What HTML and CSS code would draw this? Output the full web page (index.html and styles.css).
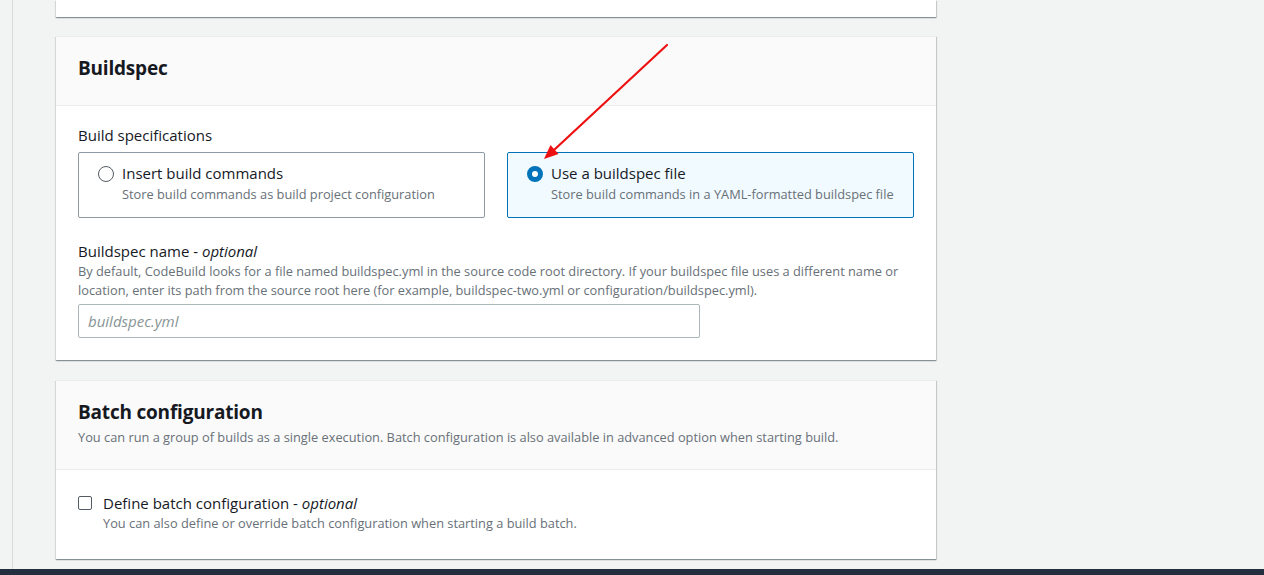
FILE: index.html
```html
<!DOCTYPE html>
<html lang="en">
<head>
<meta charset="utf-8">
<title>Buildspec</title>
<link rel="stylesheet" href="styles.css">
</head>
<body>
<div class="layout">
  <div class="rail"></div>
  <main class="main">
    <section class="card card-prev"></section>

    <section class="card">
      <header class="card-header">
        <h2 class="card-title">Buildspec</h2>
      </header>
      <div class="card-body">
        <div class="field-label">Build specifications</div>
        <div class="tiles">
          <div class="tile">
            <span class="radio"></span>
            <div class="tile-text">
              <div class="tile-title">Insert build commands</div>
              <div class="tile-desc">Store build commands as build project configuration</div>
            </div>
          </div>
          <div class="tile tile-selected">
            <span class="radio radio-on"></span>
            <div class="tile-text">
              <div class="tile-title">Use a buildspec file</div>
              <div class="tile-desc">Store build commands in a YAML-formatted buildspec file</div>
            </div>
          </div>
        </div>
        <div class="field">
          <div class="field-label">Buildspec name - <i>optional</i></div>
          <p class="field-desc">By default, CodeBuild looks for a file named buildspec.yml in the source code root directory. If your buildspec file uses a different name or location, enter its path from the source root here (for example, buildspec-two.yml or configuration/buildspec.yml).</p>
          <input class="text-input" type="text" placeholder="buildspec.yml">
        </div>
      </div>
    </section>

    <section class="card card-batch">
      <header class="card-header card-header-batch">
        <h2 class="card-title card-title-batch">Batch configuration</h2>
        <p class="card-desc">You can run a group of builds as a single execution. Batch configuration is also available in advanced option when starting build.</p>
      </header>
      <div class="card-body card-body-batch">
        <div class="check-row">
          <span class="checkbox"></span>
          <span class="check-label">Define batch configuration - <i>optional</i></span>
        </div>
        <p class="check-desc">You can also define or override batch configuration when starting a build batch.</p>
      </div>
    </section>
  </main>
</div>
<div class="footer-bar"></div>

<svg class="annotation" width="1264" height="575" viewBox="0 0 1264 575" aria-hidden="true">
  <line x1="667" y1="45" x2="554" y2="150" stroke="#ee1111" stroke-width="2.2" stroke-linecap="round"/>
  <polygon points="544,159 558.5,154 550.5,145" fill="#ee1111"/>
</svg>
</body>
</html>
```

FILE: styles.css
```css
* { box-sizing: border-box; }

html, body {
  margin: 0;
  padding: 0;
}

body {
  position: relative;
  width: 1264px;
  height: 575px;
  overflow: hidden;
  background: #f2f3f3;
  font-family: "Open Sans", "Noto Sans", sans-serif;
  color: #16191f;
}

.layout {
  display: flex;
  height: 569px;
}

.rail {
  width: 13px;
  border-right: 1px solid #d5dbdb;
  flex: none;
}

.main {
  padding-left: 43px;
  width: 923px;
}

.card {
  width: 880px;
  background: #fff;
  border-top: 1px solid #eaeded;
  box-shadow: 0 1px 1px 0 rgba(0, 28, 36, 0.3), 1px 1px 1px 0 rgba(0, 28, 36, 0.15), -1px 1px 1px 0 rgba(0, 28, 36, 0.08);
  margin-bottom: 20px;
}

.card-prev {
  height: 17px;
  border-top: none;
  margin-bottom: 19px;
}

.card-header {
  background: #fafafa;
  border-bottom: 1px solid #eaeded;
  padding: 17px 22px 23px;
}

.card-title {
  margin: 0;
  font-size: 19px;
  letter-spacing: -0.2px;
  line-height: 28px;
  font-weight: 700;
  color: #16191f;
}

.card-title-batch {
  margin-bottom: 2px;
}

.card-header-batch {
  padding-bottom: 22px;
}

.card-desc {
  margin: 0;
  font-size: 12.8px;
  line-height: 19px;
  color: #687078;
}

.card-body {
  padding: 18px 22px 22px;
}

.card-body-batch {
  padding: 22px 22px 26px;
}

.field-label {
  font-size: 15px;
  line-height: 22px;
  color: #16191f;
}

.tiles {
  display: grid;
  grid-template-columns: 1fr 1fr;
  gap: 22px;
  margin-top: 6px;
}

.tile {
  display: flex;
  align-items: flex-start;
  gap: 8px;
  border: 1px solid #8d9aa3;
  border-radius: 2px;
  padding: 9px 19px 15px;
}

.tile-selected {
  border-color: #0073bb;
  background: #f1faff;
}

.radio {
  flex: none;
  width: 16px;
  height: 16px;
  margin-top: 4px;
  border-radius: 50%;
  border: 1.5px solid #545b64;
  background: #fff;
}

.radio-on {
  border: 5px solid #0073bb;
}

.tile-title {
  font-size: 15px;
  line-height: 22px;
  color: #16191f;
  margin-bottom: 2px;
}

.tile-desc {
  font-size: 12.8px;
  line-height: 16px;
  color: #687078;
}

.field {
  margin-top: 22px;
}

.field-desc {
  margin: 0;
  font-size: 12.8px;
  line-height: 19px;
  color: #687078;
}

.text-input {
  display: block;
  margin-top: 4px;
  width: 622px;
  height: 34px;
  border: 1px solid #aab7b8;
  border-radius: 2px;
  padding: 0 9px;
  font-family: inherit;
  font-size: 15px;
  color: #16191f;
  background: #fff;
}

.text-input::placeholder {
  font-style: italic;
  color: #879596;
}

.check-row {
  display: flex;
  align-items: center;
  gap: 11px;
  height: 22px;
}

.checkbox {
  flex: none;
  width: 14px;
  height: 14px;
  border: 1.5px solid #545b64;
  border-radius: 2px;
  background: #fff;
}

.check-label {
  font-size: 15px;
  line-height: 22px;
  color: #16191f;
}

.check-desc {
  margin: 0 0 0 25px;
  font-size: 12.8px;
  line-height: 19px;
  color: #687078;
}

.footer-bar {
  height: 6px;
  background: #232f3e;
}

.annotation {
  position: absolute;
  left: 0;
  top: 0;
  pointer-events: none;
}
```
